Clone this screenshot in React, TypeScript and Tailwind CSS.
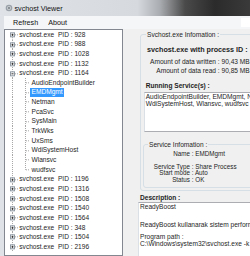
import React from 'react';

const H = 9.65;
const C = H / 2;
const LINE = '#a6a6a6';

type Row =
  | { kind: 'root'; pid: string; expanded?: boolean; first?: boolean }
  | { kind: 'child'; name: string; last?: boolean; selected?: boolean };

const childNames = ['AudioEndpointBuilder', 'EMDMgmt', 'Netman', 'PcaSvc', 'SysMain', 'TrkWks', 'UxSms', 'WdiSystemHost', 'Wlansvc', 'wudfsvc'];

const rows: Row[] = [
  { kind: 'root', pid: '928', first: true },
  { kind: 'root', pid: '988' },
  { kind: 'root', pid: '1028' },
  { kind: 'root', pid: '1132' },
  { kind: 'root', pid: '1164', expanded: true },
  ...childNames.map((n, i) => ({ kind: 'child' as const, name: n, last: i === childNames.length - 1, selected: n === 'EMDMgmt' })),
  ...['1196', '1316', '1508', '1540', '1564', '348', '1504', '2196'].map((p) => ({ kind: 'root' as const, pid: p })),
];

function RootGutter({ first, expanded }: { first?: boolean; expanded?: boolean }) {
  return (
    <svg width="14" height={H} viewBox={`0 0 14 ${H}`} className="block shrink-0">
      <line x1="7.5" y1={first ? C : 0} x2="7.5" y2={H} stroke={LINE} strokeDasharray="1 1" />
      <line x1="10" y1={C} x2="14" y2={C} stroke={LINE} strokeDasharray="1 1" />
      <rect x="5.5" y={C - 2} width="4" height="4" fill="#f6f6f6" stroke="#8e99a3" />
      <line x1="6.5" y1={C} x2="8.5" y2={C} stroke="#333" />
      {!expanded && <line x1="7.5" y1={C - 1} x2="7.5" y2={C + 1} stroke="#333" />}
    </svg>
  );
}

function ChildGutter({ last }: { last?: boolean }) {
  return (
    <svg width="25" height={H} viewBox={`0 0 25 ${H}`} className="block shrink-0">
      <line x1="7.5" y1="0" x2="7.5" y2={H} stroke={LINE} strokeDasharray="1 1" />
      <line x1="20.5" y1="0" x2="20.5" y2={last ? C : H} stroke={LINE} strokeDasharray="1 1" />
      <line x1="21" y1={C} x2="25" y2={C} stroke={LINE} strokeDasharray="1 1" />
    </svg>
  );
}

function Tree() {
  return (
    <div className="w-[119px] shrink-0 border border-[#828790] bg-white overflow-hidden">
      <div className="flex flex-col">
        {rows.map((r, i) =>
          r.kind === 'root' ? (
            <div key={i} className="flex items-center h-[9.65px]">
              <RootGutter first={r.first} expanded={r.expanded} />
              <span className="whitespace-nowrap text-[6.6px] leading-[8px] text-[#1e1e1e] pl-[0.3px]">
                svchost.exe<span className="ml-[3.8px]">PID : {r.pid}</span>
              </span>
            </div>
          ) : (
            <div key={i} className="flex items-center h-[9.65px]">
              <ChildGutter last={r.last} />
              <span
                className={
                  'whitespace-nowrap text-[6.6px] leading-[8.4px] px-[1.5px] ' +
                  (r.selected ? 'bg-[#3399ff] text-white' : 'text-[#1e1e1e]')
                }
              >
                {r.name}
              </span>
            </div>
          )
        )}
      </div>
    </div>
  );
}

function RightPanel() {
  return (
    <div className="flex-1 overflow-hidden bg-[#f0f0f0] text-[#1e1e1e]">
      <div className="w-[170px] flex flex-col">
        <fieldset className="ml-[17px] mt-[1.8px] h-[160px] w-[150px] border border-[#d5dfe5] rounded-[3px]">
          <legend className="ml-[5px] px-[1px] text-[6.6px] leading-[7px]">Svchost.exe Infomation :</legend>
          <div className="ml-[6px] mt-[7px] text-[7.2px] leading-[9px] font-bold whitespace-nowrap">svchost.exe with process ID :</div>
          <div className="mt-[3.7px] flex flex-col text-[6.6px] leading-[9px] whitespace-nowrap">
            <div className="flex">
              <div className="w-[75px] text-right">Amount of data written</div>
              <div>&nbsp;: 90,43 MB</div>
            </div>
            <div className="flex">
              <div className="w-[75px] text-right">Amount of data read</div>
              <div>&nbsp;: 90,85 MB</div>
            </div>
          </div>
          <div className="ml-[4.7px] mt-[6.2px] text-[6.6px] leading-[8px] font-bold whitespace-nowrap">Running Service(s) :</div>
          <div className="ml-[3.3px] mt-[2.6px] h-[39.7px] w-[130px] bg-white border border-[#abadb3] border-l-[#dbdfe6] pt-[0.8px] pl-[0.4px] text-[6.6px] leading-[6.5px] whitespace-nowrap overflow-hidden">
            <div>AudioEndpointBuilder, EMDMgmt, Netman, PcaSvc, SysMain,</div>
            <div>WdiSystemHost, Wlansvc, wudfsvc</div>
          </div>
          <fieldset className="ml-[2px] mt-[9.5px] h-[46.5px] w-[130px] border border-[#d5dfe5] rounded-[3px]">
            <legend className="ml-[4px] px-[1px] text-[6.6px] leading-[7px]">Service Infomation :</legend>
            <div className="flex flex-col text-[6.3px] leading-[6px] whitespace-nowrap">
              <div className="flex mt-[2.5px]">
                <div className="w-[46px] text-right">Name</div>
                <div>&nbsp;: EMDMgmt</div>
              </div>
              <div className="flex mt-[7px]">
                <div className="w-[46px] text-right">Service Type</div>
                <div>&nbsp;: Share Process</div>
              </div>
              <div className="flex">
                <div className="w-[46px] text-right">Start mode</div>
                <div>&nbsp;: Auto</div>
              </div>
              <div className="flex mt-[1px]">
                <div className="w-[46px] text-right">Status</div>
                <div>&nbsp;: OK</div>
              </div>
            </div>
          </fieldset>
        </fieldset>
        <div className="ml-[17px] mt-[3.7px] text-[6.6px] leading-[7px] font-bold whitespace-nowrap">Description :</div>
        <div className="ml-[15px] mt-[0.5px] h-[60px] w-[150px] bg-white border border-[#abadb3] border-l-[#dbdfe6] pt-[1px] pl-[1px] text-[6.6px] leading-[6.1px] whitespace-nowrap overflow-hidden">
          <div>ReadyBoost</div>
          <div>&nbsp;</div>
          <div>&nbsp;</div>
          <div>ReadyBoost kullanarak sistem performansını artırır.</div>
          <div>&nbsp;</div>
          <div>Program path :</div>
          <div>C:\Windows\system32\svchost.exe -k LocalSystemNetworkRestricted</div>
        </div>
      </div>
    </div>
  );
}

export default function App() {
  return (
    <div className="w-[250px] h-[256px] overflow-hidden flex flex-col bg-[#dde1e6] font-['Liberation_Sans',Arial,sans-serif]">
      <div className="h-[16px] shrink-0 flex items-center bg-[linear-gradient(90deg,#dfe3e8_0%,#d6dadf_55%,#a9acb0_64%,#4a4a4a_74%,#2b2b2b_86%,#3a3a3a_100%)]">
        <svg width="8" height="8" viewBox="0 0 8 8" className="ml-[5px] shrink-0">
          <circle cx="4" cy="4" r="3.3" fill="#9aa1a8" />
          <circle cx="4" cy="4" r="2" fill="#c9ced3" />
          <circle cx="4" cy="4" r="0.9" fill="#6c737a" />
        </svg>
        <span className="ml-[1.5px] text-[7.2px] leading-[9px] text-[#111] whitespace-nowrap">svchost Viewer</span>
      </div>
      <div className="flex flex-1 min-h-0">
        <div className="w-[4px] shrink-0 bg-[#dfe3e8]" />
        <div className="flex-1 flex flex-col min-w-0">
          <div className="h-[13px] shrink-0 flex items-center bg-[#f5f6f7] text-[7.2px] leading-[9px] text-[#111]">
            <span className="ml-[9px]">Refresh</span>
            <span className="ml-[10px]">About</span>
            <div className="flex-1" />
            <div className="w-[9px] h-[9px] bg-white" />
          </div>
          <div className="flex flex-1 min-h-0">
            <Tree />
            <RightPanel />
          </div>
        </div>
      </div>
    </div>
  );
}
